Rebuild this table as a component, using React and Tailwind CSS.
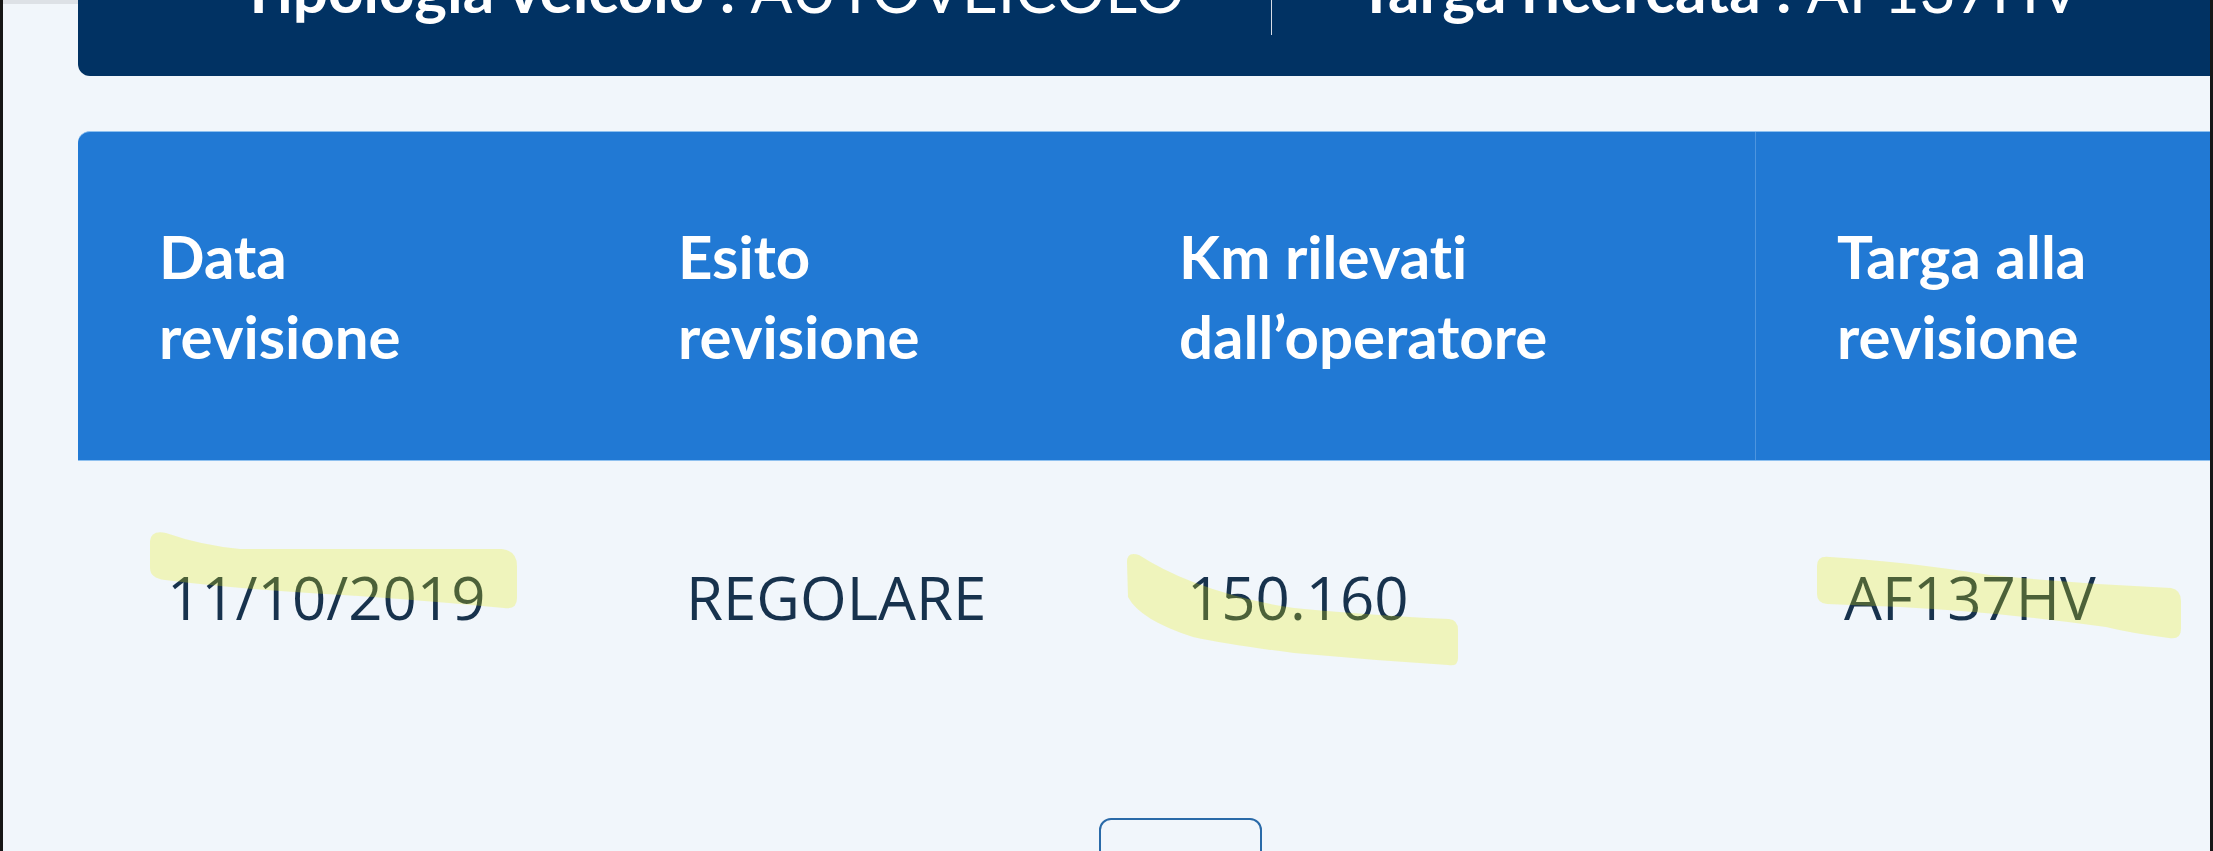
const columns = [
  { head: ["Data", "revisione"], value: "11/10/2019", width: "w-[519px]" },
  { head: ["Esito", "revisione"], value: "REGOLARE", width: "w-[501px]" },
  { head: ["Km rilevati", "dall’operatore"], value: "150.160", width: "w-[657px]" },
  { head: ["Targa alla", "revisione"], value: "AF137HV", width: "w-[620px]", divider: true },
];

function Highlights() {
  // marker strokes drawn over the screenshot
  return (
    <svg
      className="absolute left-[-3px] top-0 pointer-events-none"
      width="2213"
      height="851"
      viewBox="0 0 2213 851"
    >
      <g fill="#ecee00" fillOpacity="0.25">
        <path d="M150,541 Q151,530 166,533 Q200,545 240,549 L502,549 Q517,551 517,566 L517,598 Q517,610 504,608 Q400,598 309,593 Q230,588 165,580 Q150,578 150,568 Z" />
        <path d="M1127,562 Q1127,551 1139,555 Q1162,570 1193,582 Q1240,600 1294,608 Q1380,616 1449,619 Q1458,620 1458,630 L1458,658 Q1458,667 1448,665 Q1370,660 1294,653 Q1230,645 1193,637 Q1140,620 1128,597 Z" />
        <path d="M1817,566 Q1817,555 1830,557 Q1900,561 1990,575 Q2080,584 2171,588 Q2181,590 2181,601 L2181,629 Q2181,640 2169,638 Q2130,633 2106,627 Q2000,612 1900,607 L1827,604 Q1817,603 1817,594 Z" />
      </g>
    </svg>
  );
}

export default function App() {
  return (
    <div className="relative w-[2213px] h-[851px] overflow-hidden bg-[#f1f6fb] border-x-[3px] border-[#161616] shadow-[inset_0_4px_0_#dde1e6] font-['Open_Sans',sans-serif]">
      <div className="ml-[75px] -mt-[51px] h-[127px] w-[2300px] shrink-0 rounded-b-[12px] bg-[#013263] flex items-start pl-[162px] text-white text-[62px] leading-[80px] font-['Lato',sans-serif] [font-variant-ligatures:none]">
        <div className="whitespace-nowrap">
          <span className="font-bold">Tipologia veicolo : </span>
          <span>AUTOVEICOLO</span>
        </div>
        <div className="mx-[86px] h-[86px] w-px bg-[#d7dde6]" />
        <div className="whitespace-nowrap">
          <span className="font-bold">Targa ricercata : </span>
          <span>AF137HV</span>
        </div>
      </div>

      <div className="ml-[75px] mt-[55px] w-max">
        <div className="flex rounded-tl-[12px] bg-[#2179d4] border-y border-[#8ec0ef] text-white font-['Lato',sans-serif] [font-variant-ligatures:none]">
          {columns.map((c) => (
            <div
              key={c.value}
              className={`${c.width} h-[328px] shrink-0 flex items-center pl-[81px] text-[60px] leading-[80px] font-bold ${c.divider ? "border-l border-[#4d95df]" : ""}`}
            >
              <div>
                {c.head[0]}
                <br />
                {c.head[1]}
              </div>
            </div>
          ))}
        </div>
        <div className="flex pt-[96px] text-[#17324d]">
          {columns.map((c) => (
            <div key={c.value} className={`${c.width} shrink-0 pl-[89px] text-[60px] leading-[80px]`}>
              {c.value}
            </div>
          ))}
        </div>
      </div>

      <div className="ml-[1096px] mt-[181px] w-[163px] h-[80px] rounded-[12px] border-2 border-[#2a6aa8]" />

      <Highlights />
    </div>
  );
}
